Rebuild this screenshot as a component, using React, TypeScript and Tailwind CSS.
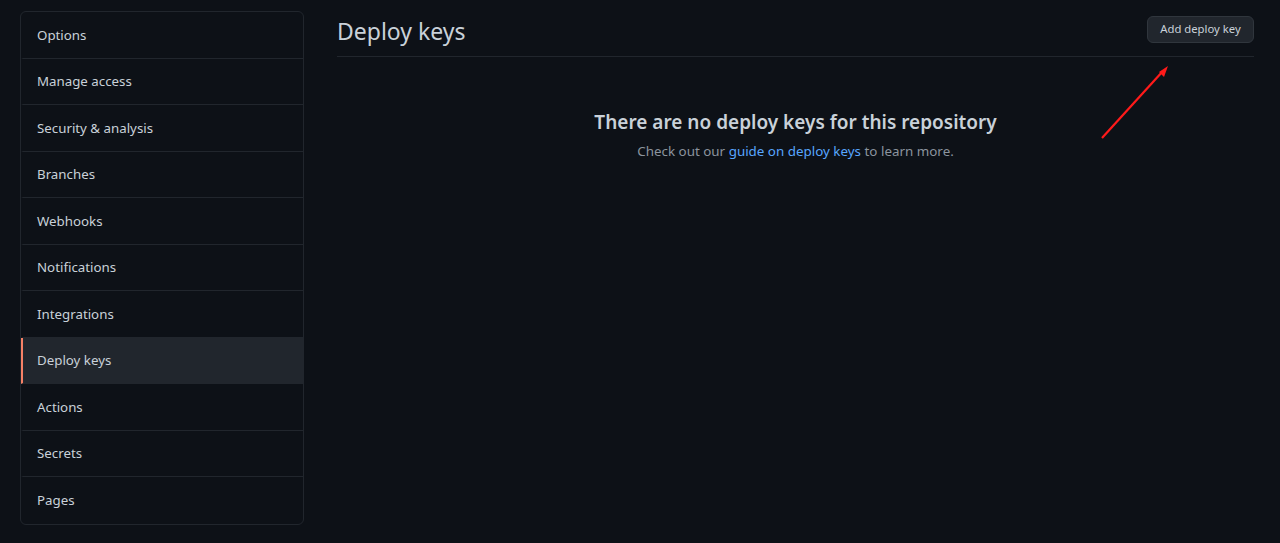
import React from "react";

const items = [
  "Options",
  "Manage access",
  "Security & analysis",
  "Branches",
  "Webhooks",
  "Notifications",
  "Integrations",
  "Deploy keys",
  "Actions",
  "Secrets",
  "Pages",
];

export default function App() {
  return (
    <div
      className="w-[1280px] h-[543px] bg-[#0d1117] text-[#c9d1d9] flex overflow-hidden"
      style={{ fontFamily: '"Noto Sans", "Open Sans", sans-serif' }}
    >
      <div className="pl-[20px] pt-[11px] w-[304px] shrink-0">
        <nav className="border border-[#21262d] rounded-md overflow-hidden flex flex-col">
          {items.map((it, i) => {
            const active = it === "Deploy keys";
            return (
              <div
                key={it}
                className={`h-[46.5px] flex items-center pl-[14px] pt-[2px] text-[13.3px] border-l-2 ${
                  active ? "border-l-[#f78166] bg-[#21262d]" : "border-l-transparent"
                } ${i < items.length - 1 ? "border-b border-b-[#21262d]" : ""}`}
              >
                {it}
              </div>
            );
          })}
        </nav>
      </div>
      <div className="ml-[33px] w-[917px] flex flex-col relative">
        <div className="flex items-start justify-between pt-[15px] pb-[9px] border-b border-[#21262d]">
          <h2 className="text-[23px] leading-[32px] font-normal">Deploy keys</h2>
          <button className="mt-[1px] h-[27px] w-[107px] text-[11.3px] rounded-md bg-[#21262d] border border-[#30363d] text-[#c9d1d9]">
            Add deploy key
          </button>
        </div>
        <div className="flex flex-col items-center pt-[50px]">
          <h3 className="text-[19px] leading-[30px] font-semibold">
            There are no deploy keys for this repository
          </h3>
          <p className="text-[13.4px] leading-[22px] text-[#8b949e] mt-[3px]">
            Check out our <span className="text-[#58a6ff]">guide on deploy keys</span> to learn more.
          </p>
        </div>
        <svg
          className="absolute left-[760px] top-[62px]"
          width="80"
          height="80"
          viewBox="0 0 80 80"
        >
          <line x1="5" y1="76" x2="66" y2="9" stroke="#ff1a1a" strokeWidth="2.2" />
          <polygon points="71,4 62,10 67,15" fill="#ff1a1a" />
        </svg>
      </div>
    </div>
  );
}
